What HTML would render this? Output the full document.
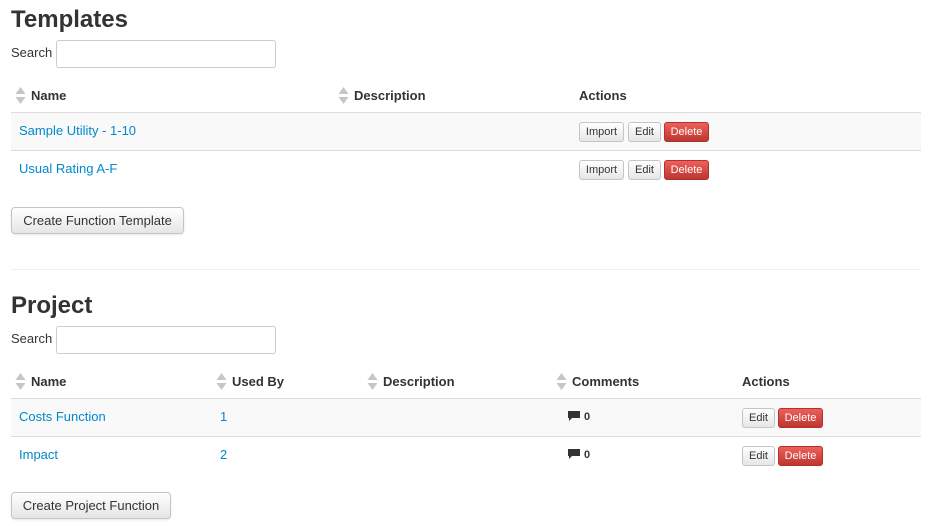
<!DOCTYPE html>
<html><head><meta charset="utf-8"><style>
*{box-sizing:border-box;margin:0;padding:0}
body{width:928px;height:526px;background:#fff;font-family:"Liberation Sans",Arial,sans-serif;color:#333;position:relative;overflow:hidden;font-size:13px}
.a{position:absolute;white-space:nowrap}
h1{position:absolute;font-size:24px;font-weight:bold;color:#333;left:11px}
.inp{position:absolute;left:56px;width:220px;height:28px;border:1px solid #ccc;border-radius:3px;background:#fff}
.th{position:absolute;font-weight:bold;font-size:13px}
.sort{position:absolute;width:11px;height:19px}
.row{position:absolute;left:11px;width:910px;height:38px;border-top:1px solid #ddd}
.lnk{position:absolute;color:#0088cc;font-size:13px}
.btn{position:absolute;height:20px;border:1px solid #c5c5c5;border-radius:3px;background:linear-gradient(#fff,#e6e6e6);font-size:11px;line-height:19px;text-align:center;color:#333}
.del{background:linear-gradient(#ee5f5b,#bd362f);border-color:#b3312b;color:#fff}
.big{position:absolute;left:11px;height:27px;border:1px solid #c5c5c5;border-radius:4px;background:linear-gradient(#fff,#e6e6e6);font-size:13px;line-height:26px;text-align:center;box-shadow:0 1px 2px rgba(0,0,0,.1)}
</style></head><body>
<svg width="0" height="0" style="position:absolute"><defs><g id="s"><path d="M0.5 8 L5.5 1 L10.5 8Z" fill="#c6c6c6"/><path d="M0.5 11 L10.5 11 L5.5 18Z" fill="#c6c6c6"/></g></defs></svg>

<h1 style="top:6px">Templates</h1>
<div class="a" style="left:11px;top:45px">Search</div>
<div class="inp" style="top:40px"></div>
<svg class="sort" style="left:15px;top:86px"><use href="#s"/></svg>
<div class="th" style="left:31px;top:88px">Name</div>
<svg class="sort" style="left:338px;top:86px"><use href="#s"/></svg>
<div class="th" style="left:354px;top:88px">Description</div>
<div class="th" style="left:579px;top:88px">Actions</div>
<div class="row" style="top:112px;background:#f9f9f9"></div>
<div class="row" style="top:150px"></div>
<div class="lnk" style="left:19px;top:123px">Sample Utility - 1-10</div>
<div class="lnk" style="left:19px;top:161px">Usual Rating A-F</div>
<div class="btn" style="left:579px;top:122px;width:45px">Import</div>
<div class="btn" style="left:628px;top:122px;width:33px">Edit</div>
<div class="btn del" style="left:664px;top:122px;width:45px">Delete</div>
<div class="btn" style="left:579px;top:160px;width:45px">Import</div>
<div class="btn" style="left:628px;top:160px;width:33px">Edit</div>
<div class="btn del" style="left:664px;top:160px;width:45px">Delete</div>
<div class="big" style="top:207px;width:173px">Create Function Template</div>
<div class="a" style="left:11px;top:269px;width:910px;border-top:1px solid #eee"></div>

<h1 style="top:292px">Project</h1>
<div class="a" style="left:11px;top:331px">Search</div>
<div class="inp" style="top:326px"></div>
<svg class="sort" style="left:15px;top:372px"><use href="#s"/></svg>
<div class="th" style="left:31px;top:374px">Name</div>
<svg class="sort" style="left:216px;top:372px"><use href="#s"/></svg>
<div class="th" style="left:232px;top:374px">Used By</div>
<svg class="sort" style="left:367px;top:372px"><use href="#s"/></svg>
<div class="th" style="left:383px;top:374px">Description</div>
<svg class="sort" style="left:556px;top:372px"><use href="#s"/></svg>
<div class="th" style="left:572px;top:374px">Comments</div>
<div class="th" style="left:742px;top:374px">Actions</div>
<div class="row" style="top:398px;background:#f9f9f9"></div>
<div class="row" style="top:436px"></div>
<div class="lnk" style="left:19px;top:409px">Costs Function</div>
<div class="lnk" style="left:220px;top:409px">1</div>
<div class="lnk" style="left:19px;top:447px">Impact</div>
<div class="lnk" style="left:220px;top:447px">2</div>
<svg class="a" style="left:568px;top:411px" width="13" height="12"><path d="M0 0H12V7H4L1 10V7H0Z" fill="#333"/></svg>
<div class="a" style="left:584px;top:410px;font-size:11px;font-weight:bold;line-height:15px">0</div>
<svg class="a" style="left:568px;top:449px" width="13" height="12"><path d="M0 0H12V7H4L1 10V7H0Z" fill="#333"/></svg>
<div class="a" style="left:584px;top:448px;font-size:11px;font-weight:bold;line-height:15px">0</div>
<div class="btn" style="left:742px;top:408px;width:33px">Edit</div>
<div class="btn del" style="left:778px;top:408px;width:45px">Delete</div>
<div class="btn" style="left:742px;top:446px;width:33px">Edit</div>
<div class="btn del" style="left:778px;top:446px;width:45px">Delete</div>
<div class="big" style="top:492px;width:160px">Create Project Function</div>
</body></html>
